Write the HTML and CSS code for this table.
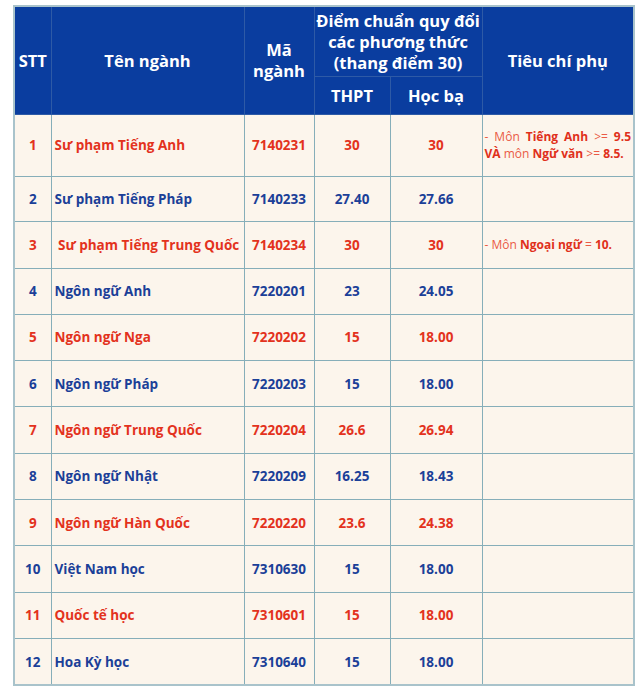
FILE: index.html
```html
<!DOCTYPE html>
<html lang="vi">
<head>
<meta charset="utf-8">
<title>Điểm chuẩn</title>
<link rel="stylesheet" href="styles.css">
</head>
<body>
<table class="tbl">
  <colgroup>
    <col class="c-stt"><col class="c-name"><col class="c-code"><col class="c-thpt"><col class="c-hb"><col class="c-note">
  </colgroup>
  <thead>
    <tr class="h1">
      <th rowspan="2">STT</th>
      <th rowspan="2">Tên ngành</th>
      <th rowspan="2">Mã<br>ngành</th>
      <th colspan="2">Điểm chuẩn quy đổi<br>các phương thức<br>(thang điểm 30)</th>
      <th rowspan="2">Tiêu chí phụ</th>
    </tr>
    <tr class="h2">
      <th>THPT</th>
      <th>Học bạ</th>
    </tr>
  </thead>
  <tbody>
    <tr class="red r1">
      <td>1</td><td class="name">Sư phạm Tiếng Anh</td><td>7140231</td><td>30</td><td>30</td>
      <td class="note"><span class="l1">- Môn <b>Tiếng Anh</b> &gt;= <b>9.5</b></span><span class="l2"><b>VÀ</b> môn <b>Ngữ văn</b> &gt;= <b>8.5.</b></span></td>
    </tr>
    <tr class="blue r2">
      <td>2</td><td class="name">Sư phạm Tiếng Pháp</td><td>7140233</td><td>27.40</td><td>27.66</td><td class="note"></td>
    </tr>
    <tr class="red r3">
      <td>3</td><td class="name">&nbsp;Sư phạm Tiếng Trung Quốc</td><td>7140234</td><td>30</td><td>30</td>
      <td class="note"><span class="l2">- Môn <b>Ngoại ngữ</b> = <b>10.</b></span></td>
    </tr>
    <tr class="blue">
      <td>4</td><td class="name">Ngôn ngữ Anh</td><td>7220201</td><td>23</td><td>24.05</td><td class="note"></td>
    </tr>
    <tr class="red">
      <td>5</td><td class="name">Ngôn ngữ Nga</td><td>7220202</td><td>15</td><td>18.00</td><td class="note"></td>
    </tr>
    <tr class="blue">
      <td>6</td><td class="name">Ngôn ngữ Pháp</td><td>7220203</td><td>15</td><td>18.00</td><td class="note"></td>
    </tr>
    <tr class="red">
      <td>7</td><td class="name">Ngôn ngữ Trung Quốc</td><td>7220204</td><td>26.6</td><td>26.94</td><td class="note"></td>
    </tr>
    <tr class="blue">
      <td>8</td><td class="name">Ngôn ngữ Nhật</td><td>7220209</td><td>16.25</td><td>18.43</td><td class="note"></td>
    </tr>
    <tr class="red">
      <td>9</td><td class="name">Ngôn ngữ Hàn Quốc</td><td>7220220</td><td>23.6</td><td>24.38</td><td class="note"></td>
    </tr>
    <tr class="blue">
      <td>10</td><td class="name">Việt Nam học</td><td>7310630</td><td>15</td><td>18.00</td><td class="note"></td>
    </tr>
    <tr class="red">
      <td>11</td><td class="name">Quốc tế học</td><td>7310601</td><td>15</td><td>18.00</td><td class="note"></td>
    </tr>
    <tr class="blue">
      <td>12</td><td class="name">Hoa Kỳ học</td><td>7310640</td><td>15</td><td>18.00</td><td class="note"></td>
    </tr>
  </tbody>
</table>
</body>
</html>
```

FILE: styles.css
```css
html, body {
  margin: 0;
  padding: 0;
  background: #ffffff;
}
body {
  padding: 5px 0 0 13px;
  font-family: "Open Sans", "DejaVu Sans", sans-serif;
}
.tbl {
  border-collapse: collapse;
  table-layout: fixed;
  width: 620px;
  border: 2px solid #a9c3cb;
}
.c-stt { width: 37px; }
.c-name { width: 193px; }
.c-code { width: 70px; }
.c-thpt { width: 76px; }
.c-hb { width: 92px; }
.c-note { width: 152px; }

th, td {
  border: 1px solid #86aeb9;
  padding: 0;
  text-align: center;
  vertical-align: middle;
  font-weight: 700;
}
th {
  background: #0a3d9f;
  color: #ffffff;
  font-size: 16.5px;
  line-height: 21px;
  border-color: #2e5aa6;
}
.h1 { height: 70px; }
.h2 { height: 38px; }
td {
  background: #fcf5ec;
  font-size: 13.5px;
  height: 45.3px;
}
.r1 td { height: 61px; }
.r2 td { height: 44px; }
.r3 td { height: 46px; }
td.name {
  text-align: left;
  padding-left: 3px;
  white-space: nowrap;
}
.red td { color: #e3321d; }
.blue td { color: #1b3f98; }
td.note {
  text-align: left;
  padding: 0 2px 0 2px;
  font-size: 12px;
  line-height: 17px;
  font-weight: 400;
  color: #ea5a45;
}
td.note b {
  font-weight: 700;
  color: #e0301b;
}
.l1 {
  display: block;
  text-align: justify;
  text-align-last: justify;
}
.l2 {
  display: block;
}
```
